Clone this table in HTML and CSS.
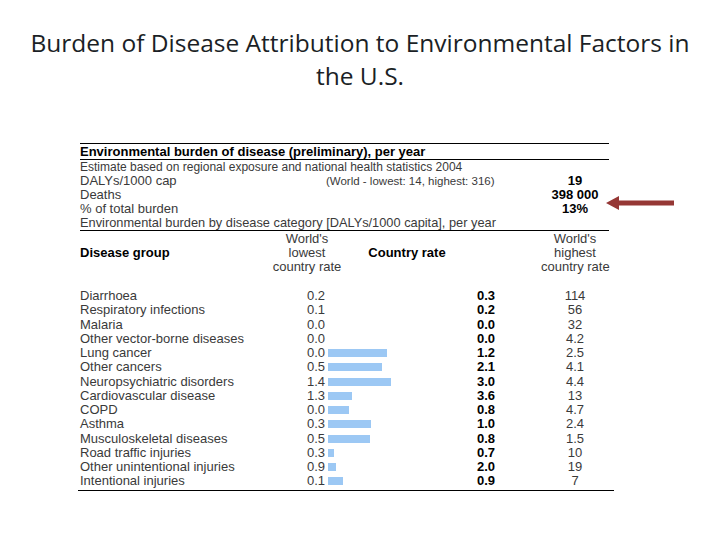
FILE: index.html
```html
<!DOCTYPE html>
<html lang="en">
<head>
<meta charset="utf-8">
<title>Burden of Disease Attribution to Environmental Factors in the U.S.</title>
<link rel="stylesheet" href="styles.css">
</head>
<body>
<h1 class="title">Burden of Disease Attribution to Environmental Factors in the U.S.</h1>

<div class="sheet">
  <div class="row head-row">Environmental burden of disease (preliminary), per year</div>
  <div class="summary">
    <div class="row small">Estimate based on regional exposure and national health statistics 2004</div>
    <div class="row">
      <span class="lbl">DALYs/1000 cap</span>
      <span class="note">(World - lowest: 14, highest: 316)</span>
      <span class="val">19</span>
    </div>
    <div class="row">
      <span class="lbl">Deaths</span>
      <span class="note"></span>
      <span class="val">398 000</span>
    </div>
    <div class="row">
      <span class="lbl">% of total burden</span>
      <span class="note"></span>
      <span class="val">13%</span>
    </div>
    <div class="row mid">Environmental burden by disease category [DALYs/1000 capita], per year</div>
  </div>

  <div class="colhead">
    <div class="ch-name">Disease group</div>
    <div class="ch-low">World's<br>lowest<br>country rate</div>
    <div class="ch-rate">Country rate</div>
    <div class="ch-gap"></div>
    <div class="ch-high">World's<br>highest<br>country rate</div>
  </div>

  <div class="data">
    <div class="drow"><span class="c-name">Diarrhoea</span><span class="c-low">0.2</span><span class="c-bar"></span><span class="c-rate">0.3</span><span class="c-high">114</span></div>
    <div class="drow"><span class="c-name">Respiratory infections</span><span class="c-low">0.1</span><span class="c-bar"></span><span class="c-rate">0.2</span><span class="c-high">56</span></div>
    <div class="drow"><span class="c-name">Malaria</span><span class="c-low">0.0</span><span class="c-bar"></span><span class="c-rate">0.0</span><span class="c-high">32</span></div>
    <div class="drow"><span class="c-name">Other vector-borne diseases</span><span class="c-low">0.0</span><span class="c-bar"></span><span class="c-rate">0.0</span><span class="c-high">4.2</span></div>
    <div class="drow"><span class="c-name">Lung cancer</span><span class="c-low">0.0</span><span class="c-bar"><i class="bar" style="width:59px"></i></span><span class="c-rate">1.2</span><span class="c-high">2.5</span></div>
    <div class="drow"><span class="c-name">Other cancers</span><span class="c-low">0.5</span><span class="c-bar"><i class="bar" style="width:54px"></i></span><span class="c-rate">2.1</span><span class="c-high">4.1</span></div>
    <div class="drow"><span class="c-name">Neuropsychiatric disorders</span><span class="c-low">1.4</span><span class="c-bar"><i class="bar" style="width:63px"></i></span><span class="c-rate">3.0</span><span class="c-high">4.4</span></div>
    <div class="drow"><span class="c-name">Cardiovascular disease</span><span class="c-low">1.3</span><span class="c-bar"><i class="bar" style="width:24px"></i></span><span class="c-rate">3.6</span><span class="c-high">13</span></div>
    <div class="drow"><span class="c-name">COPD</span><span class="c-low">0.0</span><span class="c-bar"><i class="bar" style="width:21px"></i></span><span class="c-rate">0.8</span><span class="c-high">4.7</span></div>
    <div class="drow"><span class="c-name">Asthma</span><span class="c-low">0.3</span><span class="c-bar"><i class="bar" style="width:43px"></i></span><span class="c-rate">1.0</span><span class="c-high">2.4</span></div>
    <div class="drow"><span class="c-name">Musculoskeletal diseases</span><span class="c-low">0.5</span><span class="c-bar"><i class="bar" style="width:42px"></i></span><span class="c-rate">0.8</span><span class="c-high">1.5</span></div>
    <div class="drow"><span class="c-name">Road traffic injuries</span><span class="c-low">0.3</span><span class="c-bar"><i class="bar" style="width:6px"></i></span><span class="c-rate">0.7</span><span class="c-high">10</span></div>
    <div class="drow"><span class="c-name">Other unintentional injuries</span><span class="c-low">0.9</span><span class="c-bar"><i class="bar" style="width:8px"></i></span><span class="c-rate">2.0</span><span class="c-high">19</span></div>
    <div class="drow"><span class="c-name">Intentional injuries</span><span class="c-low">0.1</span><span class="c-bar"><i class="bar" style="width:15px"></i></span><span class="c-rate">0.9</span><span class="c-high">7</span></div>
  </div>

  <svg class="arrow" width="68" height="16" viewBox="0 0 68 16" aria-hidden="true">
    <polygon points="0,8 13,1 13,5.5 68,5.5 68,10.5 13,10.5 13,15" fill="#953735"/>
  </svg>
</div>
</body>
</html>
```

FILE: styles.css
```css
html, body {
  margin: 0;
  padding: 0;
  background: #ffffff;
}

.title {
  margin: 0;
  padding: 26px 20px 0;
  text-align: center;
  font-family: "Open Sans", "Liberation Sans", sans-serif;
  font-weight: 400;
  font-size: 24.5px;
  line-height: 33px;
  color: #1b1f26;
}

.sheet {
  position: relative;
  margin: 51px 0 0 80px;
  width: 529px;
  font-family: "Liberation Sans", Arial, sans-serif;
  font-size: 13px;
  color: #3a3a3a;
}

.row {
  display: flex;
  height: 14px;
  line-height: 14px;
  white-space: nowrap;
}

.small {
  font-size: 12px;
}

.mid {
  font-size: 12.8px;
}

.head-row {
  height: 15px;
  line-height: 15px;
  border-top: 1px solid #000;
  border-bottom: 1px solid #000;
  font-weight: bold;
  color: #000;
}

.summary {
  border-bottom: 1px solid #000;
}

.lbl {
  width: 246px;
}

.note {
  width: 215px;
  font-size: 11.5px;
}

.val {
  width: 68px;
  text-align: center;
  font-weight: bold;
  color: #000;
}

.colhead {
  display: flex;
  align-items: center;
  height: 42px;
  line-height: 14px;
  margin-top: 1px;
  white-space: nowrap;
}

.ch-name {
  width: 187px;
  font-weight: bold;
  color: #000;
}

.ch-low {
  width: 80px;
  text-align: center;
}

.ch-rate {
  width: 120px;
  text-align: center;
  font-weight: bold;
  color: #000;
}

.ch-gap {
  width: 74px;
}

.ch-high {
  width: 68px;
  text-align: center;
}

.data {
  margin-top: 15px;
  margin-left: -2px;
  padding-left: 2px;
  margin-right: -5px;
  padding-right: 5px;
  border-bottom: 1px solid #000;
  padding-bottom: 1px;
}

.drow {
  display: flex;
  align-items: center;
  height: 14.25px;
  line-height: 14px;
  white-space: nowrap;
}

.c-name {
  width: 227px;
}

.c-low {
  width: 21px;
}

.c-bar {
  width: 149px;
  display: flex;
  align-items: center;
}

.bar {
  display: block;
  height: 8px;
  background: #9cc8f4;
}

.c-rate {
  width: 64px;
  font-weight: bold;
  color: #000;
}

.c-high {
  width: 68px;
  text-align: center;
}

.arrow {
  position: absolute;
  left: 526px;
  top: 52px;
}
```
